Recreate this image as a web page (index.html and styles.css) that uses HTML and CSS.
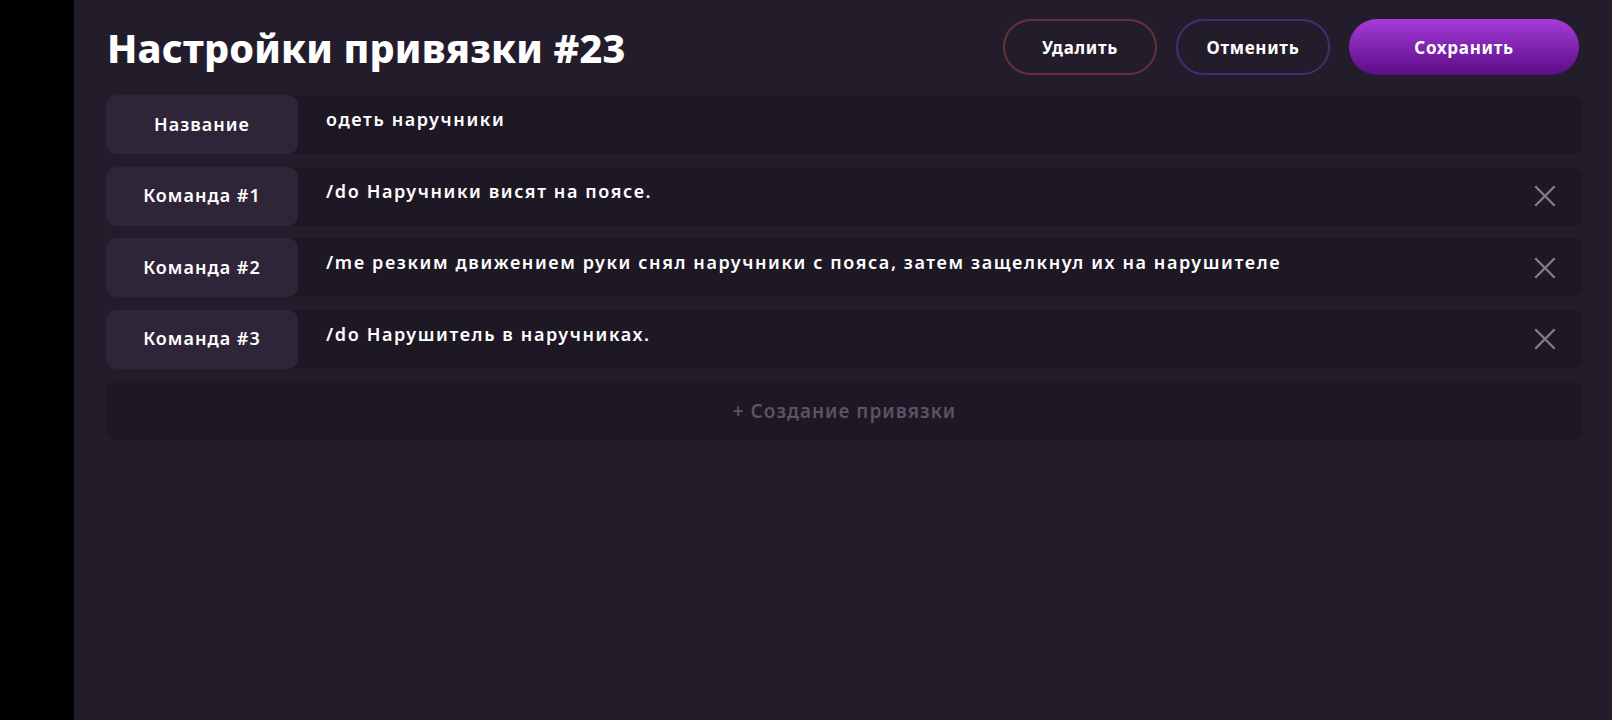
FILE: index.html
```html
<!DOCTYPE html>
<html lang="ru">
<head>
  <meta charset="UTF-8">
  <meta name="viewport" content="width=device-width, initial-scale=1.0">
  <title>Настройки привязки #23</title>
  <link rel="stylesheet" href="styles.css">
</head>
<body>
  <div class="layout">
    <div class="side"></div>

    <main class="page">
      <header class="head">
        <h1>Настройки привязки #23</h1>
        <div class="actions">
          <button class="btn btn-delete">Удалить</button>
          <button class="btn btn-cancel">Отменить</button>
          <button class="btn btn-save">Сохранить</button>
        </div>
      </header>

      <div class="rows">
        <div class="row">
          <div class="label">Название</div>
          <div class="value">одеть наручники</div>
        </div>

        <div class="row">
          <div class="label">Команда #1</div>
          <div class="value">/do Наручники висят на поясе.</div>
          <button class="remove" title="Удалить">
            <svg viewBox="0 0 24 24" width="26" height="26"><path d="M3 3L21 21M21 3L3 21" /></svg>
          </button>
        </div>

        <div class="row">
          <div class="label">Команда #2</div>
          <div class="value">/me резким движением руки снял наручники с пояса, затем защелкнул их на нарушителе</div>
          <button class="remove" title="Удалить">
            <svg viewBox="0 0 24 24" width="26" height="26"><path d="M3 3L21 21M21 3L3 21" /></svg>
          </button>
        </div>

        <div class="row">
          <div class="label">Команда #3</div>
          <div class="value">/do Нарушитель в наручниках.</div>
          <button class="remove" title="Удалить">
            <svg viewBox="0 0 24 24" width="26" height="26"><path d="M3 3L21 21M21 3L3 21" /></svg>
          </button>
        </div>

        <button class="row add">+ Создание привязки</button>
      </div>
    </main>
  </div>
</body>
</html>
```

FILE: styles.css
```css
body {
  margin: 0;
  background-color: #000;
  font-family: "Noto Sans", "Open Sans", sans-serif;
  color: #fff;
}
.layout {
  display: flex;
  min-height: 100vh;
}
.side {
  width: 74px;
  background-color: #000;
}
.page {
  flex: 1;
  background-color: #231d2b;
  padding: 0 29px 0 32px;
}
.head {
  display: flex;
  align-items: center;
  justify-content: space-between;
  height: 95px;
}
.head h1 {
  margin: 0 0 0 1px;
  font-size: 39.5px;
  font-weight: 800;
  letter-spacing: 0.2px;
}
.actions {
  display: flex;
  gap: 19px;
  margin-right: 4px;
  margin-top: -1px;
}
.btn {
  height: 56px;
  border-radius: 28px;
  font-family: inherit;
  font-size: 17px;
  font-weight: 700;
  letter-spacing: 0.7px;
  color: #fff;
  background: transparent;
  cursor: pointer;
}
.btn-delete {
  width: 154px;
  border: 2px solid #6a2f3b;
}
.btn-cancel {
  width: 154px;
  border: 2px solid #4a2b72;
}
.btn-save {
  width: 230px;
  border: none;
  background: linear-gradient(#a53cd8, #5b0c88);
}
.rows {
  display: flex;
  flex-direction: column;
  gap: 12.5px;
}
.row {
  display: flex;
  align-items: stretch;
  height: 59px;
  border-radius: 10px;
  background-color: #1d1824;
}
.label {
  flex: 0 0 192px;
  display: flex;
  align-items: center;
  justify-content: center;
  padding-bottom: 2px;
  border-radius: 10px;
  background-color: #2e2539;
  font-size: 18px;
  font-weight: 600;
  letter-spacing: 1px;
}
.value {
  flex: 1;
  padding: 12px 0 0 28px;
  font-size: 18px;
  font-weight: 600;
  letter-spacing: 1.6px;
}
.remove {
  align-self: center;
  margin-right: 25px;
  padding: 0;
  border: none;
  background: none;
  cursor: pointer;
  line-height: 0;
}
.remove path {
  stroke: #857b90;
  stroke-width: 2.2;
  fill: none;
}
.add {
  justify-content: center;
  align-items: center;
  border: none;
  font-family: inherit;
  font-size: 19px;
  font-weight: 600;
  letter-spacing: 1px;
  color: #5c5366;
  cursor: pointer;
}
```
